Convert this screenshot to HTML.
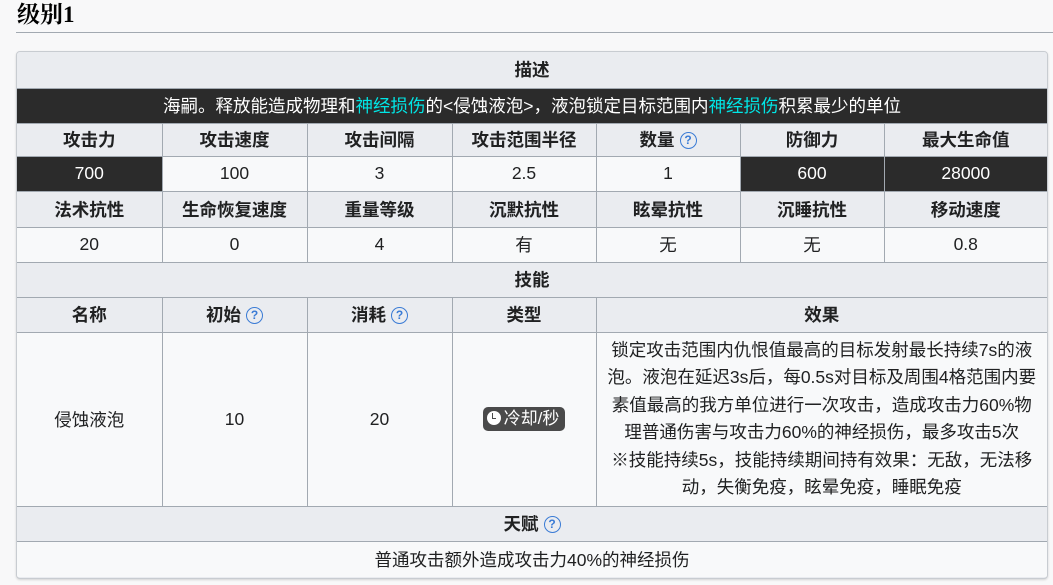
<!DOCTYPE html>
<html><head><meta charset="utf-8"><style>
body{margin:0;width:1053px;height:585px;background:#f8f8f9;font-family:"Liberation Sans","Noto Sans CJK SC",sans-serif;overflow:hidden;position:relative}
h2{position:absolute;left:17px;top:0;margin:0;font:bold 23px/30px "Liberation Serif","Noto Serif CJK SC",serif;color:#000}
.hr{position:absolute;left:16px;top:32px;width:1037px;height:1px;background:#a2a9b1}
.wrap{position:absolute;left:16px;top:51px;width:1030px;height:526px;border:1px solid #c8ccd1;border-radius:4px;background:#eaecf0;overflow:hidden;box-shadow:0 1px 2px rgba(0,0,0,.15)}
table{border-collapse:collapse;width:1030px;table-layout:fixed;font-size:17.5px;color:#202122}
td{border:1px solid #a2a9b1;text-align:center;padding:0;background:#f8f9fa}
tr>td:first-child{border-left:none}tr>td:last-child{border-right:none}
tr:first-child td{border-top:none}tr:last-child td{border-bottom:none}
.h{background:#eaecf0;font-weight:bold}
.d{background:#2b2b2b;color:#fff}
.c{color:#00e5e5}
.q{display:inline-block;width:15px;height:15px;border:1.5px solid #3a7bd5;border-radius:50%;color:#3a7bd5;font-size:12px;line-height:15px;font-weight:bold;vertical-align:2px;margin-left:5px;box-sizing:content-box}
.tag{display:inline-block;background:#4a4a4a;color:#fff;border-radius:5px;padding:0 6px 0 4px;line-height:24px;font-size:17px}
.tag i{display:inline-block;width:14px;height:14px;background:#fff;border-radius:50%;vertical-align:-1px;margin-right:3px;position:relative}
.tag i:after{content:"";position:absolute;left:5px;top:2px;width:3px;height:5px;border-left:1.5px solid #4a4a4a;border-bottom:1.5px solid #4a4a4a}
.eff{line-height:27.5px;padding:0 10px}
</style></head><body>
<h2>级别1</h2><div class="hr"></div>
<div class="wrap"><table>
<colgroup><col style="width:145px"><col style="width:145px"><col style="width:145px"><col style="width:144px"><col style="width:144px"><col style="width:144px"><col style="width:163px"></colgroup>
<tr style="height:36px"><td class="h" colspan="7">描述</td></tr>
<tr style="height:35px"><td class="d" colspan="7">海嗣。释放能造成物理和<span class="c">神经损伤</span>的&lt;侵蚀液泡&gt;，液泡锁定目标范围内<span class="c">神经损伤</span>积累最少的单位</td></tr>
<tr style="height:33px"><td class="h">攻击力</td><td class="h">攻击速度</td><td class="h">攻击间隔</td><td class="h">攻击范围半径</td><td class="h">数量<span class="q">?</span></td><td class="h">防御力</td><td class="h">最大生命值</td></tr>
<tr style="height:35px"><td class="d">700</td><td>100</td><td>3</td><td>2.5</td><td>1</td><td class="d">600</td><td class="d">28000</td></tr>
<tr style="height:36px"><td class="h">法术抗性</td><td class="h">生命恢复速度</td><td class="h">重量等级</td><td class="h">沉默抗性</td><td class="h">眩晕抗性</td><td class="h">沉睡抗性</td><td class="h">移动速度</td></tr>
<tr style="height:35px"><td>20</td><td>0</td><td>4</td><td>有</td><td>无</td><td>无</td><td>0.8</td></tr>
<tr style="height:35px"><td class="h" colspan="7">技能</td></tr>
<tr style="height:35px"><td class="h">名称</td><td class="h">初始<span class="q">?</span></td><td class="h">消耗<span class="q">?</span></td><td class="h">类型</td><td class="h" colspan="3">效果</td></tr>
<tr style="height:174px"><td>侵蚀液泡</td><td>10</td><td>20</td><td><span class="tag"><i></i>冷却/秒</span></td><td colspan="3" class="eff">锁定攻击范围内仇恨值最高的目标发射最长持续7s的液泡。液泡在延迟3s后，每0.5s对目标及周围4格范围内要素值最高的我方单位进行一次攻击，造成攻击力60%物理普通伤害与攻击力60%的神经损伤，最多攻击5次<br>※技能持续5s，技能持续期间持有效果：无敌，无法移动，失衡免疫，眩晕免疫，睡眠免疫</td></tr>
<tr style="height:35px"><td class="h" colspan="7">天赋<span class="q">?</span></td></tr>
<tr style="height:36px"><td colspan="7">普通攻击额外造成攻击力40%的神经损伤</td></tr>
</table></div>
</body></html>
